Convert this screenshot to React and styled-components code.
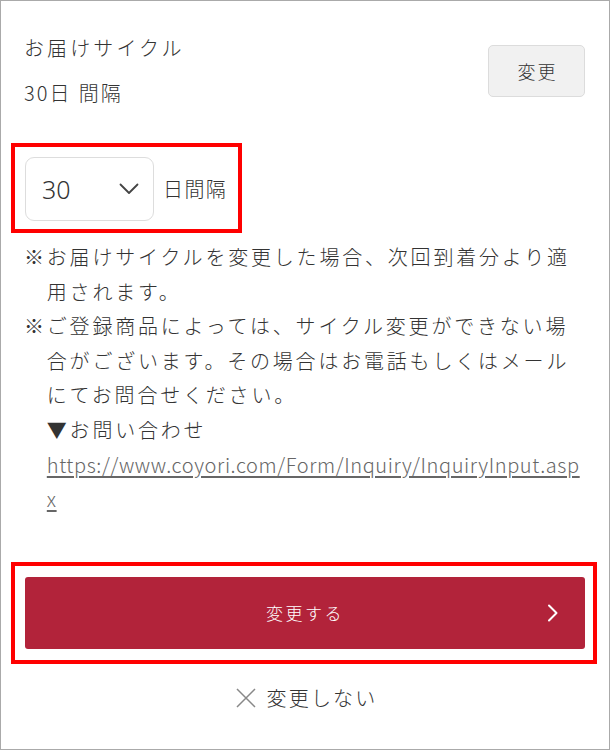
import React from "react";
import styled, { createGlobalStyle } from "styled-components";

const GlobalStyle = createGlobalStyle`
  html, body { margin: 0; padding: 0; background: #fff; }
  body {
    font-family: "Noto Sans CJK JP", "Noto Sans", sans-serif;
    color: #333;
  }
  * { box-sizing: border-box; }
`;

const Page = styled.div`
  width: 610px;
  height: 750px;
  border: 1px solid #aaa;
  padding: 32px 24px 0 23px;
  overflow: hidden;
`;

const Header = styled.div`
  display: flex;
  align-items: center;
  justify-content: space-between;
`;

const HeaderText = styled.div`
  display: flex;
  flex-direction: column;
  gap: 15px;
`;

const Label = styled.div`
  font-size: 20px;
  line-height: 30px;
  letter-spacing: 3.1px;
  font-weight: 300;
`;

const Value = styled.div`
  font-size: 20px;
  line-height: 30px;
  letter-spacing: 2px;
  font-weight: 300;
  word-spacing: 1px;
`;

const GhostButton = styled.button`
  width: 97px;
  height: 52px;
  border: 1px solid #dcdcdc;
  border-radius: 5px;
  background: #f1f1f1;
  color: #333;
  font-family: inherit;
  font-size: 18px;
  font-weight: 300;
  letter-spacing: 2px;
  padding: 0 0 0 2px;
  cursor: pointer;
`;

const Highlight = styled.div`
  border: 4px solid #ff0000;
  margin: ${(p) => p.$margin};
  padding: ${(p) => p.$padding};
  display: ${(p) => (p.$inline ? "inline-flex" : "flex")};
  align-items: center;
`;

const SelectRow = styled.div`
  display: flex;
  align-items: center;
  gap: 9px;
`;

const SelectBox = styled.div`
  width: 129px;
  height: 64px;
  border: 1px solid #ddd;
  border-radius: 9px;
  display: flex;
  align-items: center;
  justify-content: space-between;
  padding: 0 14px 0 16px;
  font-family: "Noto Sans", "Open Sans", sans-serif;
  font-size: 25px;
  font-weight: 300;
  color: #333;
`;

const Unit = styled.span`
  font-size: 20px;
  letter-spacing: 1.4px;
  font-weight: 300;
  line-height: 30px;
`;

const Notes = styled.div`
  margin-top: 7px;
`;

const Note = styled.p`
  margin: 0;
  font-size: 20px;
  line-height: 34.6px;
  letter-spacing: 2.8px;
  font-weight: 300;
  padding-left: 22.8px;
  text-indent: -22.8px;
`;

const SubLine = styled.span`
  display: block;
  text-indent: 0;
`;

const Link = styled.a`
  display: block;
  text-indent: 0;
  color: #666;
  text-decoration: underline;
  text-underline-offset: 3px;
  letter-spacing: 0.6px;
  word-break: break-all;
`;

const PrimaryButton = styled.button`
  width: 100%;
  height: 72px;
  border: none;
  border-radius: 3px;
  background: #b2233a;
  color: #fff;
  font-family: inherit;
  font-size: 17px;
  font-weight: 300;
  letter-spacing: 2.5px;
  position: relative;
  display: flex;
  align-items: center;
  justify-content: center;
  cursor: pointer;
  padding: 0;
`;

const Chevron = styled.svg`
  position: absolute;
  right: 26px;
  top: 50%;
  transform: translateY(-50%);
`;

const CancelRow = styled.div`
  margin-top: 19px;
  display: flex;
  align-items: center;
  justify-content: center;
  gap: 11px;
  font-size: 20px;
  line-height: 30px;
  letter-spacing: 2.2px;
  font-weight: 300;
  padding-left: 4px;
`;

export default function App() {
  return (
    <>
      <GlobalStyle />
      <Page>
        <Header>
          <HeaderText>
            <Label>お届けサイクル</Label>
            <Value>30日 間隔</Value>
          </HeaderText>
          <GhostButton>変更</GhostButton>
        </Header>

        <Highlight $inline $margin="35px 0 0 -13px" $padding="10px 11px 8px 10px">
          <SelectRow>
            <SelectBox>
              <span>30</span>
              <svg width="20" height="12" viewBox="0 0 20 12" fill="none">
                <path d="M1.5 1.5 L10 10 L18.5 1.5" stroke="#444" strokeWidth="1.8" strokeLinecap="round" strokeLinejoin="round" />
              </svg>
            </SelectBox>
            <Unit>日間隔</Unit>
          </SelectRow>
        </Highlight>

        <Notes>
          <Note>※お届けサイクルを変更した場合、次回到着分より適用されます。</Note>
          <Note>
            ※ご登録商品によっては、サイクル変更ができない場合がございます。その場合はお電話もしくはメールにてお問合せください。
            <SubLine>▼お問い合わせ</SubLine>
            <Link href="#">https://www.coyori.com/Form/Inquiry/InquiryInput.aspx</Link>
          </Note>
        </Notes>

        <Highlight $margin="45px -12px 0 -13px" $padding="11px 8px 11px 10px">
          <PrimaryButton>
            変更する
            <Chevron width="12" height="18" viewBox="0 0 12 18" fill="none">
              <path d="M2 1.5 L9.5 9 L2 16.5" stroke="#fff" strokeWidth="2" strokeLinecap="round" strokeLinejoin="round" />
            </Chevron>
          </PrimaryButton>
        </Highlight>

        <CancelRow>
          <svg width="20" height="20" viewBox="0 0 20 20" fill="none">
            <path d="M1 1 L19 19 M19 1 L1 19" stroke="#888" strokeWidth="1.5" />
          </svg>
          <span>変更しない</span>
        </CancelRow>
      </Page>
    </>
  );
}
